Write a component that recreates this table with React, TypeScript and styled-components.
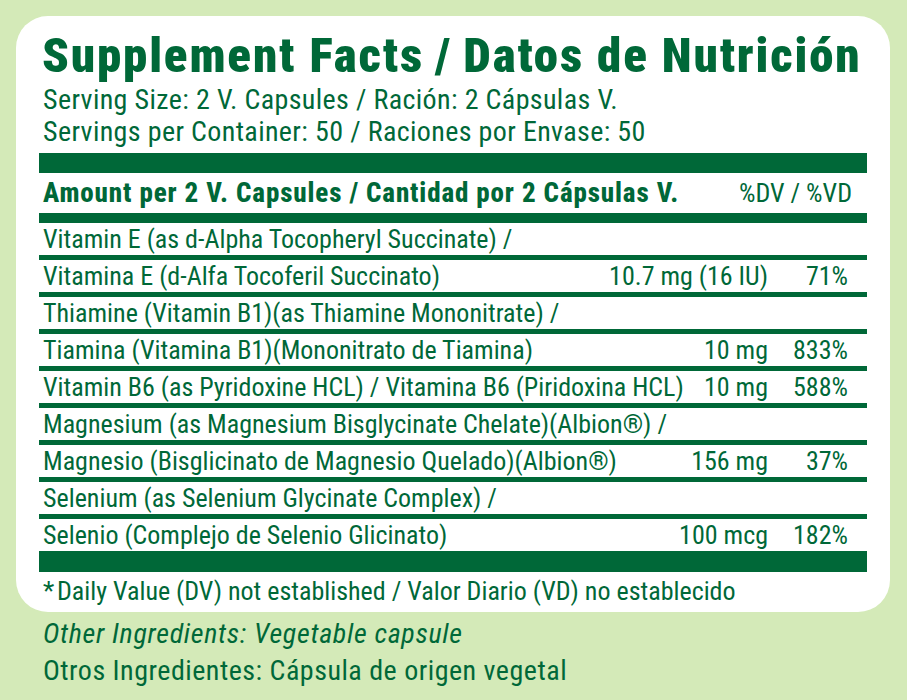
import React from "react";
import styled, { createGlobalStyle } from "styled-components";

const GREEN = "#006838";
const BG = "#d4eab8";

const Global = createGlobalStyle`
  html, body { margin: 0; padding: 0; background: ${BG}; }
  body { font-family: 'Roboto Condensed', 'Roboto', 'Liberation Sans', sans-serif; color: ${GREEN}; }
`;

const Page = styled.div`
  width: 907px;
  height: 700px;
  background: ${BG};
  padding-top: 16px;
  box-sizing: border-box;
  overflow: hidden;
`;

const Card = styled.section`
  margin: 0 17px 0 16px;
  background: #fff;
  border-radius: 32px;
  padding: 16px 23px 6px 23px;
`;

const Title = styled.h1`
  margin: 0;
  padding-left: 3px;
  font-size: 49px;
  line-height: 48px;
  font-weight: 900;
  white-space: nowrap;
  letter-spacing: 1.85px;
`;

const Serving = styled.p`
  margin: 4px 0 0;
  padding-left: 4px;
  font-size: 28px;
  line-height: 32px;
  white-space: nowrap;
  letter-spacing: 0.37px;
`;

const Bar = styled.div<{ h: number }>`
  height: ${(p) => p.h}px;
  background: ${GREEN};
`;

const Table = styled.div`
  margin-top: 5px;
  display: flex;
  flex-direction: column;
`;

const HeaderRow = styled.div`
  height: 40px;
  display: flex;
  align-items: center;
  justify-content: space-between;
  padding: 0 15px 0 4px;
  font-size: 26px;
  line-height: 40px;
  white-space: nowrap;
`;

const HeadLabel = styled.span`
  font-weight: 800;
  font-size: 27px;
  letter-spacing: 0.88px;
`;

const HeadDV = styled.span`
  font-weight: 400;
`;

const Row = styled.div<{ last?: boolean }>`
  display: grid;
  grid-template-columns: 1fr auto 80px;
  align-items: end;
  padding: 0 19px 3px 4px;
  box-sizing: content-box;
  height: 29px;
  font-size: 26px;
  line-height: 26px;
  white-space: nowrap;
  border-bottom: ${(p) => (p.last ? "none" : `5px solid ${GREEN}`)};
`;

const Name = styled.span``;
const Amount = styled.span`
  text-align: right;
`;
const DV = styled.span`
  text-align: right;
`;

const Footnote = styled.p`
  margin: 4px 0 0;
  padding-left: 4px;
  font-size: 26px;
  line-height: 30px;
  white-space: nowrap;
`;

const Other = styled.div`
  margin-top: 3px;
  padding-left: 43px;
  font-size: 28px;
  line-height: 37px;
  white-space: nowrap;
`;

const OtherLine = styled.div<{ italic?: boolean }>`
  font-style: ${(p) => (p.italic ? "italic" : "normal")};
  letter-spacing: ${(p) => (p.italic ? "0.7px" : "0.5px")};
`;

type Item = { name: string; amount?: string; dv?: string };

const items: Item[] = [
  { name: "Vitamin E (as d-Alpha Tocopheryl Succinate) /" },
  { name: "Vitamina E (d-Alfa Tocoferil Succinato)", amount: "10.7 mg (16 IU)", dv: "71%" },
  { name: "Thiamine (Vitamin B1)(as Thiamine Mononitrate) /" },
  { name: "Tiamina (Vitamina B1)(Mononitrato de Tiamina)", amount: "10 mg", dv: "833%" },
  { name: "Vitamin B6 (as Pyridoxine HCL) / Vitamina B6 (Piridoxina HCL)", amount: "10 mg", dv: "588%" },
  { name: "Magnesium (as Magnesium Bisglycinate Chelate)(Albion®) /" },
  { name: "Magnesio (Bisglicinato de Magnesio Quelado)(Albion®)", amount: "156 mg", dv: "37%" },
  { name: "Selenium (as Selenium Glycinate Complex) /" },
  { name: "Selenio (Complejo de Selenio Glicinato)", amount: "100 mcg", dv: "182%" },
];

export default function App() {
  return (
    <Page>
      <Global />
      <Card>
        <Title>Supplement Facts&thinsp;/&thinsp;Datos de Nutrición</Title>
        <Serving>
          Serving Size: 2 V. Capsules / Ración: 2 Cápsulas V.
          <br />
          Servings per Container: 50 / Raciones por Envase: 50
        </Serving>
        <Table>
          <Bar h={20} />
          <HeaderRow>
            <HeadLabel>Amount per 2 V. Capsules / Cantidad por 2 Cápsulas V.</HeadLabel>
            <HeadDV>%DV / %VD</HeadDV>
          </HeaderRow>
          <Bar h={10} />
          {items.map((it, i) => (
            <Row key={i} last={i === items.length - 1}>
              <Name>{it.name}</Name>
              <Amount>{it.amount ?? ""}</Amount>
              <DV>{it.dv ?? ""}</DV>
            </Row>
          ))}
          <Bar h={21} />
        </Table>
        <Footnote>*&#8202;Daily Value (DV) not established / Valor Diario (VD) no establecido</Footnote>
      </Card>
      <Other>
        <OtherLine italic>Other Ingredients: Vegetable capsule</OtherLine>
        <OtherLine>Otros Ingredientes: Cápsula de origen vegetal</OtherLine>
      </Other>
    </Page>
  );
}
